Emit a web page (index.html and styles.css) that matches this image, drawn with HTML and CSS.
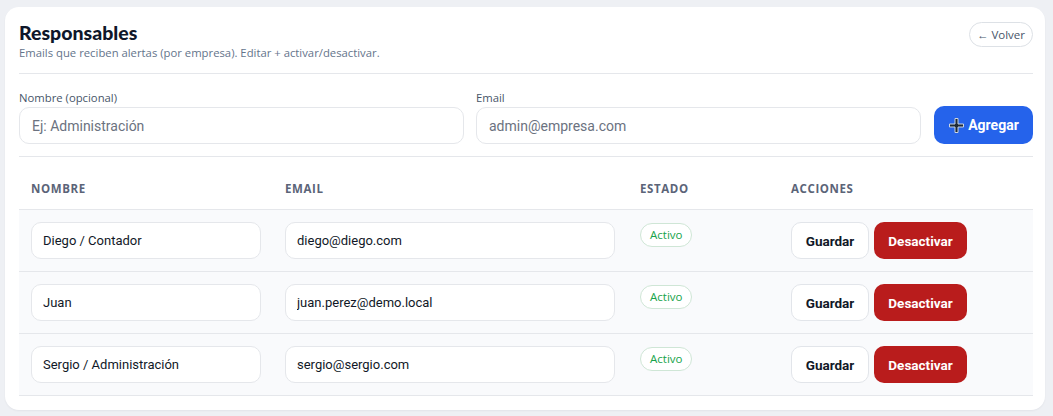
FILE: index.html
```html
<!DOCTYPE html>
<html lang="es">
<head>
<meta charset="utf-8">
<title>Responsables</title>
<link rel="stylesheet" href="styles.css">
</head>
<body>
<div class="card">
  <div class="head">
    <div>
      <h1 class="title">Responsables</h1>
      <p class="sub">Emails que reciben alertas (por empresa). Editar + activar/desactivar.</p>
    </div>
    <button class="back">← Volver</button>
  </div>
  <div class="form">
    <label class="field">
      <span class="lbl">Nombre (opcional)</span>
      <input class="inp" placeholder="Ej: Administración">
    </label>
    <label class="field">
      <span class="lbl">Email</span>
      <input class="inp" placeholder="admin@empresa.com">
    </label>
    <button class="add"><svg class="plus" width="17" height="17" viewBox="0 0 17 17"><path d="M7 1.5h3v5.5h5.5v3H10v5.5H7V10H1.5V7H7z" fill="#1f2937" stroke="#cbd5e1" stroke-width="1"/></svg>Agregar</button>
  </div>
  <table class="tbl">
    <colgroup><col class="c1"><col class="c2"><col class="c3"><col class="c4"></colgroup>
    <thead>
      <tr><th>Nombre</th><th>Email</th><th>Estado</th><th>Acciones</th></tr>
    </thead>
    <tbody>
      <tr>
        <td><input class="cell-inp" value="Diego / Contador"></td>
        <td><input class="cell-inp" value="diego@diego.com"></td>
        <td><span class="badge">Activo</span></td>
        <td><div class="acts"><button class="save">Guardar</button><button class="deact">Desactivar</button></div></td>
      </tr>
      <tr>
        <td><input class="cell-inp" value="Juan"></td>
        <td><input class="cell-inp" value="juan.perez@demo.local"></td>
        <td><span class="badge">Activo</span></td>
        <td><div class="acts"><button class="save">Guardar</button><button class="deact">Desactivar</button></div></td>
      </tr>
      <tr>
        <td><input class="cell-inp" value="Sergio / Administración"></td>
        <td><input class="cell-inp" value="sergio@sergio.com"></td>
        <td><span class="badge">Activo</span></td>
        <td><div class="acts"><button class="save">Guardar</button><button class="deact">Desactivar</button></div></td>
      </tr>
    </tbody>
  </table>
</div>
</body>
</html>
```
FILE: styles.css
```css
* { box-sizing: border-box; }
html, body { margin: 0; }
body {
  background: #eef0f4;
  padding: 7px 8px 6px 5px;
  font-family: "Open Sans", "Noto Sans", sans-serif;
  color: #0f172a;
}
.card {
  background: #fff;
  border-radius: 14px;
  padding: 14px 12px 14px 14px;
  box-shadow: 0 1px 2px rgba(15, 23, 42, 0.05);
}
.head {
  display: flex;
  justify-content: space-between;
  align-items: flex-start;
  padding-bottom: 13px;
  border-bottom: 1px solid #e5e7eb;
}
.title {
  margin: 0;
  font-family: Lato, sans-serif;
  font-size: 19.5px;
  line-height: 24px;
  font-weight: 900;
  color: #0f172a;
}
.sub {
  margin: 1px 0 0;
  font-size: 11.3px;
  line-height: 14px;
  color: #64748b;
}
.back {
  margin-top: 1px;
  height: 25px;
  padding: 0 7px;
  border: 1px solid #dde1e6;
  border-radius: 13px;
  background: #fff;
  font-family: "Open Sans", sans-serif;
  font-size: 11.5px;
  color: #475569;
}
.form {
  display: grid;
  grid-template-columns: 1fr 1fr auto;
  gap: 12px;
  align-items: end;
  padding: 17px 0 12px;
  border-bottom: 1px solid #e5e7eb;
}
.field { display: flex; flex-direction: column; gap: 2px; }
.lbl { font-size: 11.3px; line-height: 14px; color: #475569; }
.inp {
  height: 37px;
  border: 1px solid #e5e7eb;
  border-radius: 10px;
  padding: 0 12px;
  font-family: Roboto, sans-serif;
  font-size: 14px;
  color: #0f172a;
  outline: none;
}
.inp::placeholder { color: #6b7280; }
.add {
  margin-left: 1px;
  height: 38px;
  width: 99px;
  display: flex;
  align-items: center;
  justify-content: center;
  gap: 3px;
  border: 0;
  border-radius: 10px;
  background: #2563eb;
  color: #fff;
  font-family: Roboto, sans-serif;
  font-weight: 700;
  font-size: 14px;
}
.plus { flex: none; }
.tbl {
  width: 100%;
  border-collapse: collapse;
  table-layout: fixed;
}
.c1 { width: 254px; }
.c2 { width: 355px; }
.c3 { width: 151px; }
.c4 { width: 254px; }
.tbl th {
  text-align: left;
  padding: 24px 12px 12px;
  font-size: 11.5px;
  line-height: 16px;
  font-weight: 700;
  letter-spacing: 0.6px;
  text-transform: uppercase;
  color: #5b6478;
  border-bottom: 1px solid #e5e7eb;
}
.tbl td {
  padding: 12px 12px 12px;
  vertical-align: top;
  background: #f9fafc;
  border-bottom: 1px solid #e5e7eb;
  height: 62px;
}
.cell-inp {
  width: 100%;
  height: 37px;
  border: 1px solid #e5e7eb;
  border-radius: 10px;
  background: #fff;
  padding: 0 11px;
  font-family: Roboto, sans-serif;
  font-size: 13px;
  color: #111827;
  outline: none;
}
.tbl td:nth-child(2) .cell-inp { width: 330px; }
.tbl td:nth-child(1) .cell-inp { width: 230px; }
.badge {
  display: inline-block;
  margin-top: 1px;
  height: 24px;
  line-height: 22px;
  padding: 0 9px;
  border: 1px solid #cfe6d6;
  border-radius: 12px;
  background: #fff;
  color: #16a34a;
  font-size: 11.5px;
}
.acts { display: flex; gap: 5px; }
.save, .deact {
  height: 37px;
  border-radius: 10px;
  font-family: Roboto, sans-serif;
  font-weight: 700;
  font-size: 13.5px;
  padding: 0 13px;
}
.save {
  background: #fff;
  border: 1px solid #e2e5ea;
  color: #111827;
  width: 78px;
}
.deact {
  background: #b91c1c;
  border: 0;
  color: #fff;
  width: 93px;
}
```
